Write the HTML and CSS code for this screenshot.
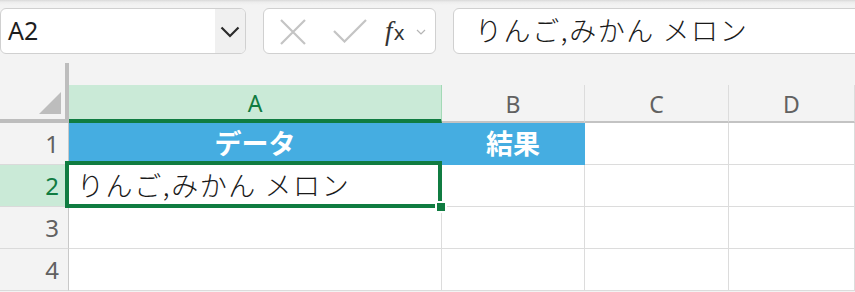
FILE: index.html
```html
<!DOCTYPE html>
<html lang="ja">
<head>
<meta charset="utf-8">
<link rel="stylesheet" href="styles.css">
</head>
<body>
<div class="toolbar">
  <div class="namebox">
    <span class="name-text">A2</span>
    <span class="name-drop">
      <svg width="20" height="12" viewBox="0 0 20 12"><path d="M1.5 1.5 L10 10 L18.5 1.5" fill="none" stroke="#2b2b2b" stroke-width="2.2"/></svg>
    </span>
  </div>
  <div class="fxbox">
    <svg class="ico-x" width="26" height="26" viewBox="0 0 26 26"><path d="M1 1 L25 25 M25 1 L1 25" stroke="#c4c4c4" stroke-width="2.2" fill="none"/></svg>
    <svg class="ico-check" width="34" height="24" viewBox="0 0 34 24"><path d="M1 12 L11.5 22.5 L33 1" stroke="#c4c4c4" stroke-width="2.2" fill="none"/></svg>
    <span class="fx"><i>f</i><span class="fx-x">x</span></span>
    <svg class="ico-small" width="10" height="6" viewBox="0 0 10 6"><path d="M1 1 L5 5 L9 1" stroke="#b5b5b5" stroke-width="1.2" fill="none"/></svg>
  </div>
  <div class="formula">りんご,みかん メロン</div>
</div>
<div class="sheet">
  <div class="corner"><span class="tri"></span></div>
  <div class="colhead sel">A</div>
  <div class="colhead">B</div>
  <div class="colhead">C</div>
  <div class="colhead">D</div>

  <div class="rowhead">1</div>
  <div class="cell blue center">データ</div>
  <div class="cell blue center">結果</div>
  <div class="cell"></div>
  <div class="cell"></div>

  <div class="rowhead sel">2</div>
  <div class="cell active">りんご,みかん メロン<div class="selection"><span class="handle"></span></div></div>
  <div class="cell"></div>
  <div class="cell"></div>
  <div class="cell"></div>

  <div class="rowhead">3</div>
  <div class="cell"></div>
  <div class="cell"></div>
  <div class="cell"></div>
  <div class="cell"></div>

  <div class="rowhead">4</div>
  <div class="cell"></div>
  <div class="cell"></div>
  <div class="cell"></div>
  <div class="cell"></div>
</div>
</body>
</html>
```
FILE: styles.css
```css
* { box-sizing: border-box; }
html, body { margin: 0; padding: 0; }
body {
  background: #f3f3f3;
  width: 855px;
  height: 292px;
  overflow: hidden;
  font-family: "Noto Sans", "Noto Sans CJK JP", sans-serif;
}
.toolbar {
  height: 63px;
  display: flex;
  align-items: flex-start;
  padding-top: 8px;
  background: linear-gradient(#d9d9d9 0px, #ececec 2px, #f3f3f3 5px);
}
.namebox {
  width: 246px;
  height: 46px;
  border: 1px solid #d0d0d0;
  border-radius: 6px;
  background: #fff;
  display: flex;
  overflow: hidden;
}
.name-text {
  flex: 1;
  font-family: "Noto Sans", sans-serif;
  font-size: 25px;
  color: #1e1e1e;
  padding-left: 7px;
  line-height: 43px;
}
.name-drop {
  width: 30px;
  background: #f0f0f0;
  display: flex;
  align-items: center;
  justify-content: center;
  padding-top: 2px;
}
.fxbox {
  margin-left: 17px;
  width: 173px;
  height: 46px;
  border: 1px solid #d0d0d0;
  border-radius: 6px;
  background: #fff;
  display: flex;
  align-items: center;
  padding-left: 16px;
}
.ico-x { margin-top: 1px; }
.ico-check { margin-left: 27px; }
.fx {
  margin-left: 18px;
  font-family: "Liberation Serif", serif;
  font-size: 27px;
  color: #333;
  line-height: 1;
  display: flex;
  align-items: baseline;
}
.fx i { font-style: italic; }
.fx-x { font-family: "DejaVu Sans", sans-serif; font-size: 19px; margin-left: 1px; }
.ico-small { margin-left: 11px; margin-top: 2px; }
.formula {
  margin-left: 17px;
  flex: 1;
  margin-right: -20px;
  height: 46px;
  border: 1px solid #d0d0d0;
  border-radius: 6px;
  background: #fff;
  padding-left: 21px;
  font-family: "Noto Sans CJK JP", sans-serif;
  font-size: 27px;
  font-weight: 300;
  letter-spacing: 1.6px;
  line-height: 42px;
  color: #1a1a1a;
}
.sheet {
  display: grid;
  grid-template-columns: 69px 373px 143px 144px 1fr;
  grid-template-rows: 60px 42px 42px 42px 42px;
}
.corner {
  position: relative;
  border-right: 4px solid #bdbdbd;
  border-bottom: 4px solid #bdbdbd;
  background: #f3f3f3;
}
.tri {
  position: absolute;
  right: 4px;
  bottom: 5px;
  width: 0;
  height: 0;
  border-left: 22px solid transparent;
  border-bottom: 22px solid #bdbdbd;
}
.colhead {
  align-self: end;
  height: 38px;
  border-right: 1px solid #dcdcdc;
  border-bottom: 2px solid #c3c3c3;
  text-align: center;
  font-family: "Noto Sans", sans-serif;
  font-size: 23px;
  line-height: 38px;
  color: #616161;
}
.colhead.sel {
  background: #caead7;
  color: #107c41;
  border-right-color: #a3d9b6;
  border-bottom: 4px solid #107c41;
  line-height: 36px;
}
.rowhead {
  border-right: 1px solid #c8c8c8;
  border-bottom: 1px solid #dadada;
  text-align: right;
  padding-right: 9px;
  font-family: "Noto Sans", sans-serif;
  font-size: 24px;
  line-height: 42px;
  color: #616161;
}
.rowhead.sel {
  background: #caead7;
  color: #107c41;
}
.cell {
  background: #fff;
  border-right: 1px solid #dcdcdc;
  border-bottom: 1px solid #dcdcdc;
  font-family: "Noto Sans CJK JP", sans-serif;
  font-size: 27px;
  line-height: 40px;
  color: #1a1a1a;
  white-space: nowrap;
}
.cell.blue {
  background: #45ade1;
  border-color: #45ade1;
  color: #fff;
  font-weight: 700;
  font-size: 27px;
}
.center { text-align: center; }
.cell.active {
  position: relative;
  padding-left: 8px;
  font-weight: 300;
  letter-spacing: 1.6px;
}
.selection {
  position: absolute;
  left: -4px;
  top: -4px;
  right: -1px;
  bottom: -2px;
  border: 4px solid #107c41;
}
.handle {
  position: absolute;
  left: 366px;
  top: 36px;
  width: 12px;
  height: 12px;
  background: #107c41;
  border: 2px solid #fff;
}
```
